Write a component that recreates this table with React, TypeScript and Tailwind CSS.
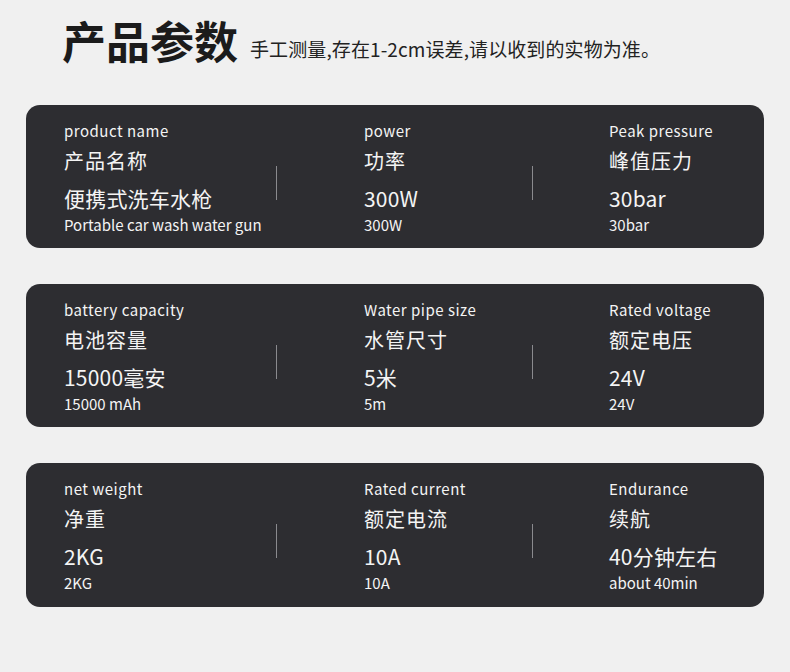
import React from "react";

type Cell = { en: string; cn: string; big: string; small: string };

const rows: Cell[][] = [
  [
    { en: "product name", cn: "产品名称", big: "便携式洗车水枪", small: "Portable car wash water gun" },
    { en: "power", cn: "功率", big: "300W", small: "300W" },
    { en: "Peak pressure", cn: "峰值压力", big: "30bar", small: "30bar" },
  ],
  [
    { en: "battery capacity", cn: "电池容量", big: "15000毫安", small: "15000 mAh" },
    { en: "Water pipe size", cn: "水管尺寸", big: "5米", small: "5m" },
    { en: "Rated voltage", cn: "额定电压", big: "24V", small: "24V" },
  ],
  [
    { en: "net weight", cn: "净重", big: "2KG", small: "2KG" },
    { en: "Rated current", cn: "额定电流", big: "10A", small: "10A" },
    { en: "Endurance", cn: "续航", big: "40分钟左右", small: "about 40min" },
  ],
];

const font = { fontFamily: '"Noto Sans CJK SC", "Noto Sans", sans-serif' };

function Col({ c, w }: { c: Cell; w: string }) {
  return (
    <div className={`${w} flex flex-col text-[#f4f4f4]`}>
      <div className="text-[15px] leading-[20px] tracking-[0.5px]">{c.en}</div>
      <div className="mt-[6px] text-[20px] leading-[28px] tracking-[1px]">{c.cn}</div>
      <div className="mt-[9px] text-[21px] leading-[28px] tracking-[0.2px]">{c.big}</div>
      <div className="mt-[3px] text-[15px] leading-[20px]">{c.small}</div>
    </div>
  );
}

function Divider() {
  return <div className="w-px h-[34px] bg-[#8a8a8e] mt-[45px] shrink-0" />;
}

export default function App() {
  const heights = ["h-[143px]", "h-[143px]", "h-[144px]"];
  const tops = ["mt-0", "mt-[36px]", "mt-[36px]"];
  return (
    <div className="w-[790px] h-[672px] bg-[#f0f0f0] overflow-hidden" style={font}>
      <div className="flex items-end pl-[62px] pt-[14px] h-[66px]">
        <div className="text-[44px] leading-[52px] font-bold text-[#1b1b1b]">产品参数</div>
        <div className="ml-[12px] mb-[5px] text-[19px] leading-[24px] tracking-[0.1px] text-[#222]">
          手工测量,存在1-2cm误差,请以收到的实物为准。
        </div>
      </div>
      <div className="flex flex-col mt-[39px] ml-[26px] w-[738px]">
        {rows.map((r, i) => (
          <div
            key={i}
            className={`${heights[i]} ${tops[i]} rounded-[14px] bg-[#2d2d31] flex items-start pl-[38px] pt-[16px]`}
          >
            <Col c={r[0]} w="w-[212px]" />
            <Divider />
            <div className="w-[87px] shrink-0" />
            <Col c={r[1]} w="w-[168px]" />
            <Divider />
            <div className="w-[76px] shrink-0" />
            <Col c={r[2]} w="w-[150px]" />
          </div>
        ))}
      </div>
    </div>
  );
}
